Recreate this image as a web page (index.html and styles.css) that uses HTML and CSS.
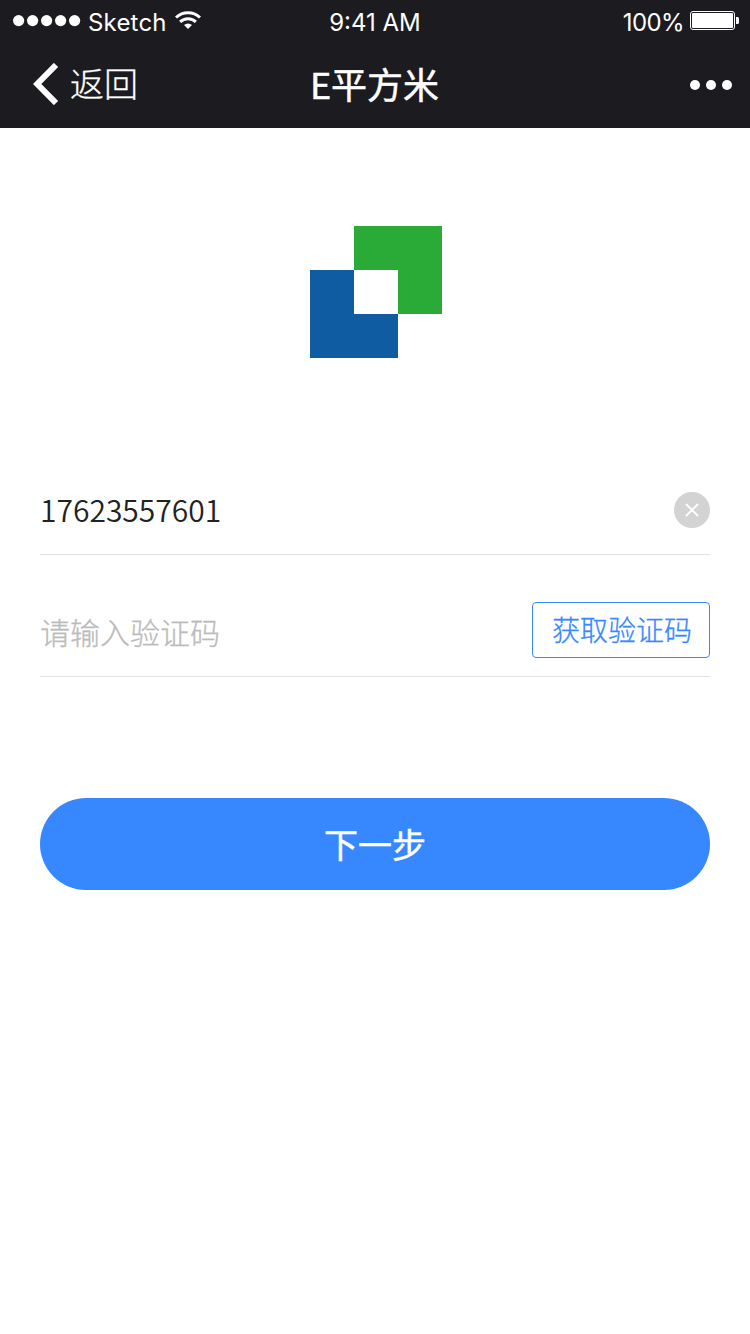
FILE: index.html
```html
<!DOCTYPE html>
<html lang="zh-CN">
<head>
<meta charset="utf-8">
<title>E平方米</title>
<link rel="stylesheet" href="styles.css">
</head>
<body>
<header class="header">
  <div class="status">
    <div class="status-left">
      <svg class="signal" width="68" height="12" viewBox="0 0 68 12" fill="#fff"><circle cx="5.6" cy="5.6" r="5.6"/><circle cx="19.6" cy="5.6" r="5.6"/><circle cx="33.6" cy="5.6" r="5.6"/><circle cx="47.6" cy="5.6" r="5.6"/><circle cx="61.6" cy="5.6" r="5.6"/></svg>
      <span class="carrier">Sketch</span>
      <svg class="wifi" width="26" height="19" viewBox="0 0 26 19" fill="none" stroke="#fff" stroke-width="3"><path d="M1 6.500A17.500 17.500 0 0 1 25 6.500"/><path d="M5.100 10.900A11.500 11.500 0 0 1 20.900 10.900"/><path d="M13 18L9 14A6 6 0 0 1 17 14Z" fill="#fff" stroke="none"/></svg>
    </div>
    <span class="clock">9:41 AM</span>
    <div class="status-right">
      <span class="percent">100%</span>
      <svg class="battery" width="49" height="19" viewBox="0 0 49 19"><rect x=".5" y=".5" width="44" height="18" rx="2.5" fill="none" stroke="#fff"/><rect x="2" y="2" width="41" height="15" rx="1" fill="#fff"/><path d="M46 6h1.5q1.500 0 1.500 1.500v4q0 1.500-1.500 1.500H46z" fill="#fff"/></svg>
    </div>
  </div>
  <nav class="nav">
    <a class="back"><svg class="chevron" width="26" height="42" viewBox="0 0 26 42" fill="none" stroke="#fff" stroke-width="6"><path d="M23 2L4.200 21L23 40"/></svg><span>返回</span></a>
    <h1 class="title">E平方米</h1>
    <svg class="more" width="42" height="10" viewBox="0 0 42 10" fill="#fff"><circle cx="5" cy="5" r="5"/><circle cx="21" cy="5" r="5"/><circle cx="37" cy="5" r="5"/></svg>
  </nav>
</header>
<main class="main">
  <svg class="logo" width="132" height="132" viewBox="0 0 132 132"><path d="M44 0h88v88H88V44H44z" fill="#2aab38"/><path d="M0 44h44v44h44v44H0z" fill="#105ca2"/></svg>
  <div class="field">
    <span class="phone">17623557601</span>
    <svg class="clear" width="36" height="36" viewBox="0 0 36 36"><circle cx="18" cy="18" r="18" fill="#d3d3d3"/><path d="M12.500 12.500l11 11M23.500 12.500l-11 11" stroke="#fff" stroke-width="1.800" stroke-linecap="round"/></svg>
  </div>
  <div class="field code-field">
    <span class="placeholder">请输入验证码</span>
    <button class="code">获取验证码</button>
  </div>
  <button class="next">下一步</button>
</main>
</body>
</html>
```
FILE: styles.css
```css
* { box-sizing: border-box; }
body {
  margin: 0;
  min-height: 1334px;
  background: #fff;
  font-family: "Noto Sans CJK SC", sans-serif;
}
svg { display: block; flex: none; }
button { font-family: inherit; padding: 0; margin: 0; }
.header { height: 128px; background: #1c1b20; color: #fff; }
.status {
  height: 40px;
  display: grid;
  grid-template-columns: 1fr auto 1fr;
  padding: 0 11px 0 13px;
  font-family: Inter, sans-serif;
  font-size: 24px;
  line-height: 46px;
}
.status-left, .status-right { display: flex; align-items: flex-start; }
.status-right { justify-content: flex-end; }
.signal { margin-top: 15px; }
.carrier { margin-left: 7px; letter-spacing: .2px; }
.clock { margin-left: -2px; }
.percent { letter-spacing: -.6px; }
.wifi { margin: 11px 0 0 8px; }
.battery { margin: 11px 0 0 6px; }
.nav {
  height: 88px;
  display: grid;
  grid-template-columns: 1fr auto 1fr;
  align-items: center;
  padding: 0 18px 0 33px;
}
.back { display: flex; align-items: center; font-size: 34px; font-weight: 300; line-height: 50px; -webkit-text-stroke: .3px #fff; }
.back span { margin: -3px 0 0 11px; }
.title {
  margin: -2px 0 0 -16px;
  font-size: 36px;
  font-weight: 400;
  line-height: 54px;
  -webkit-text-stroke: .5px #fff;
}
.more { justify-self: end; margin-top: 2px; }
.main { display: flex; flex-direction: column; padding: 98px 40px 0; }
.logo { align-self: center; margin-left: 2px; }
.field {
  height: 89px;
  margin-top: 108px;
  border-bottom: 1px solid #e2e2e2;
  display: flex;
  align-items: center;
  justify-content: space-between;
  font-size: 30px;
  line-height: 44px;
}
.phone { color: #222; font-weight: 350; margin-top: -2px; }
.code-field { height: 94px; margin-top: 28px; }
.placeholder { color: #bbb; font-weight: 300; margin-top: 2px; -webkit-text-stroke: .3px #bbb; }
.code {
  width: 178px;
  height: 56px;
  border: 1px solid #3788ff;
  border-radius: 4px;
  background: #fff;
  color: #3788ff;
  font-size: 28px;
  font-weight: 300;
  line-height: 50px;
  padding: 0 0 2px 2px;
  -webkit-text-stroke: .3px #3788ff;
}
.next {
  height: 92px;
  margin-top: 121px;
  padding-bottom: 1px;
  border: 0;
  border-radius: 46px;
  background: #3788ff;
  color: #fff;
  font-size: 34px;
  font-weight: 400;
  -webkit-text-stroke: .5px #fff;
}
```
